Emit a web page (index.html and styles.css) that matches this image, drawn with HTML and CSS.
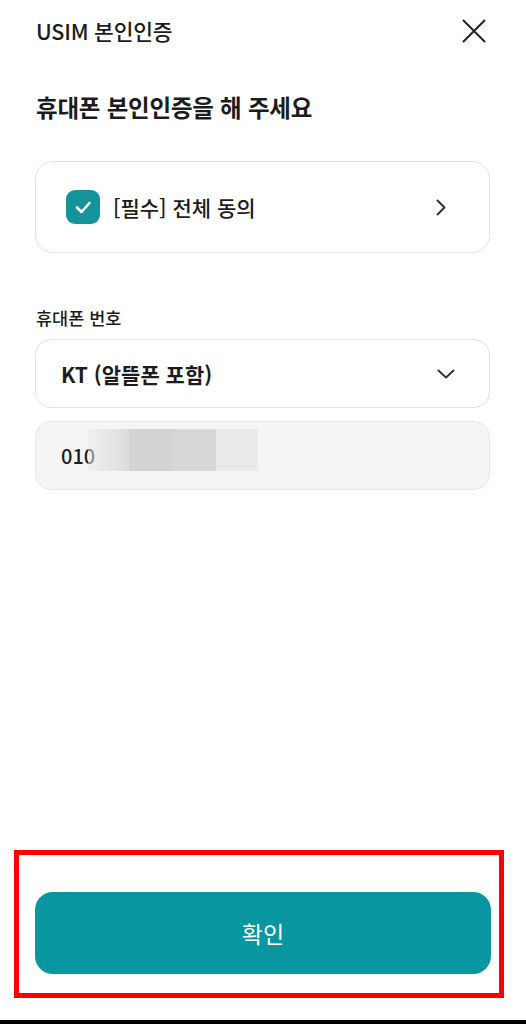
FILE: index.html
```html
<!DOCTYPE html>
<html lang="ko">
<head>
  <meta charset="UTF-8">
  <title>USIM 본인인증</title>
  <link rel="stylesheet" href="styles.css">
</head>
<body>
  <div class="screen">
    <div class="topbar">
      <span class="topbar-title">USIM 본인인증</span>
      <svg class="close" width="24" height="24" viewBox="0 0 24 24">
        <path d="M1.5 1.5 L22.5 22.5 M22.5 1.5 L1.5 22.5" stroke="#222" stroke-width="2" fill="none" stroke-linecap="round"/>
      </svg>
    </div>

    <div class="content">
      <h1 class="title">휴대폰 본인인증을 해 주세요</h1>

      <div class="card agree">
        <span class="checkbox">
          <svg width="34" height="34" viewBox="0 0 34 34">
            <polyline points="11,17.5 15.5,22 23.5,13" stroke="#fff" stroke-width="2.6" fill="none" stroke-linecap="round" stroke-linejoin="round"/>
          </svg>
        </span>
        <span class="agree-text">[필수] 전체 동의</span>
        <svg class="chev-right" width="12" height="17" viewBox="0 0 12 17">
          <polyline points="2.5,1.5 9.5,8.5 2.5,15.5" stroke="#333" stroke-width="2" fill="none" stroke-linecap="round" stroke-linejoin="round"/>
        </svg>
      </div>

      <div class="label">휴대폰 번호</div>

      <div class="card select">
        <span class="select-text">KT (알뜰폰 포함)</span>
        <svg class="chev-down" width="18" height="10" viewBox="0 0 18 10">
          <polyline points="1.5,1.5 9,8.5 16.5,1.5" stroke="#333" stroke-width="2" fill="none" stroke-linecap="round" stroke-linejoin="round"/>
        </svg>
      </div>

      <div class="card phone">
        <span class="phone-text">010</span>
        <div class="mask">
          <span class="m1"></span><span class="m2"></span><span class="m3"></span><span class="m4"></span>
        </div>
      </div>
    </div>

    <div class="cta-frame">
      <button class="cta">확인</button>
    </div>
    <div class="home-bar"></div>
  </div>
</body>
</html>
```

FILE: styles.css
```css
body { margin: 0; background: #fff; font-family: "Noto Sans CJK KR", "Noto Sans", sans-serif; color: #1c1c1c; }
.screen { width: 526px; height: 1024px; display: flex; flex-direction: column; }

.topbar { height: 64px; display: flex; align-items: center; justify-content: space-between; padding: 0 40px 0 36px; }
.topbar-title { font-size: 21.5px; line-height: 28px; margin-top: -2px; font-weight: 500; letter-spacing: -0.2px; }
.close { margin-top: -2px; }

.content { flex: 1; padding: 0 36px 0 35px; }
.title { margin: 28px 0 0 1px; font-size: 23.5px; line-height: 30px; font-weight: 700; letter-spacing: -0.2px; }

.card {
  border: 1px solid #e2e2e2;
  border-radius: 18px;
  display: flex;
  align-items: center;
  box-sizing: border-box;
}
.agree { margin-top: 39px; height: 92px; padding: 0 42px 0 30px; }
.checkbox {
  width: 34px;
  height: 34px;
  border-radius: 9px;
  background: #14939b;
  display: flex;
}
.agree-text { flex: 1; margin-left: 13px; font-size: 21px; line-height: 30px; font-weight: 500; }

.label { margin: 54px 0 0 1px; font-size: 17.5px; line-height: 22px; font-weight: 500; }

.select { margin-top: 10px; height: 69px; padding: 0 34px 0 25px; border-radius: 16px; }
.select-text { flex: 1; font-size: 21px; font-weight: 700; line-height: 28px; }

.phone {
  position: relative;
  margin-top: 13px;
  height: 69px;
  padding: 0 25px;
  border-radius: 16px;
  background: #f5f5f5;
  border-color: #e6e6e6;
}
.phone-text { font-size: 20px; line-height: 28px; font-weight: 500; }
.mask { position: absolute; left: 52px; top: 7px; height: 42px; display: flex; filter: blur(0.6px); }
.mask span { height: 42px; }
.m1 { width: 41px; background: linear-gradient(to right, rgba(235,235,235,0.5), #dcdcdc); }
.m2 { width: 44px; background: #d3d3d3; }
.m3 { width: 43px; background: #d7d7d7; }
.m4 { width: 42px; background: #eaeaea; }

.cta-frame {
  margin: 0 22px 22px 14px;
  border: 5px solid #ff0000;
  padding: 37px 8px 19px 16px;
}
.cta {
  display: block;
  width: 100%;
  height: 82px;
  border: none;
  border-radius: 18px;
  background: #0896a1;
  color: #fff;
  font-family: "Noto Sans CJK KR", sans-serif;
  font-size: 23px;
}
.home-bar { height: 4px; background: #000; }
```
